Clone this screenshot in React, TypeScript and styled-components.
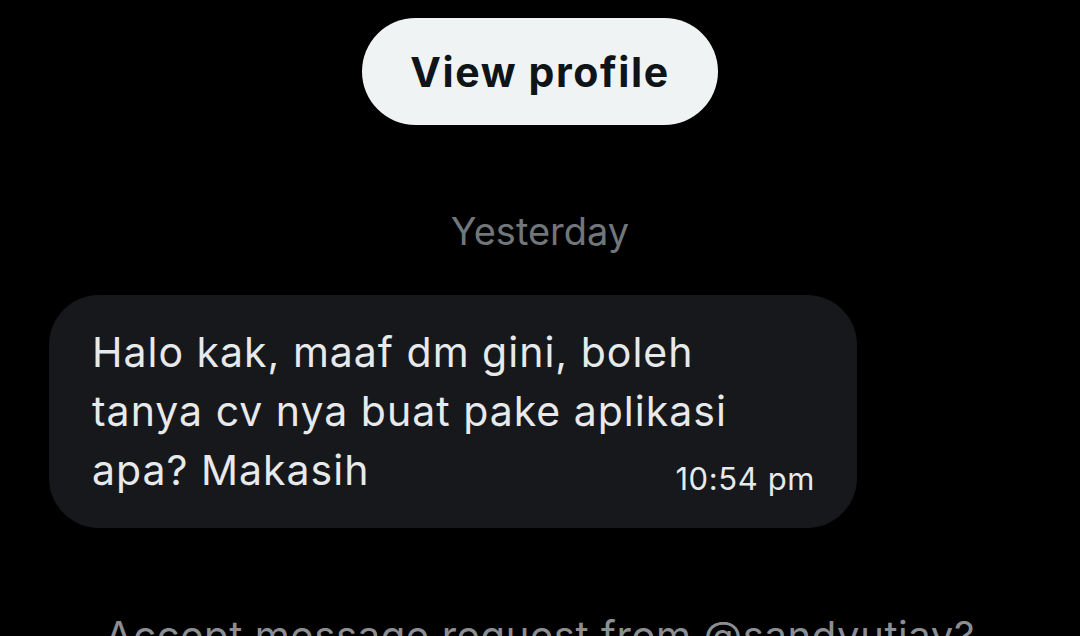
import * as React from 'react';
import styled, { createGlobalStyle } from 'styled-components';

const GlobalStyle = createGlobalStyle`
  html, body {
    margin: 0;
    padding: 0;
    background: #000;
    overflow: hidden;
  }
  body {
    font-family: Inter, "Noto Sans", sans-serif;
    -webkit-font-smoothing: antialiased;
  }
`;

const Screen = styled.div`
  width: 1080px;
  height: 636px;
  background: #000;
  display: flex;
  flex-direction: column;
  align-items: center;
  overflow: hidden;

  & > * {
    flex-shrink: 0;
  }
`;

const ProfileButton = styled.button`
  margin-top: 18px;
  width: 356px;
  height: 107px;
  padding: 0;
  border: none;
  border-radius: 54px;
  background: #eff3f4;
  color: #0f1419;
  font-family: inherit;
  font-size: 41px;
  font-weight: 700;
  letter-spacing: 1.6px;
  cursor: pointer;
`;

const DayLabel = styled.div`
  margin-top: 86px;
  height: 40px;
  line-height: 40px;
  font-size: 38px;
  color: #71767b;
`;

const Thread = styled.div`
  align-self: stretch;
  display: flex;
  flex-direction: column;
  padding: 0 49px;
  margin-top: 44px;
`;

const Bubble = styled.div`
  width: 808px;
  height: 233px;
  box-sizing: border-box;
  background: #16181c;
  border-radius: 50px;
  padding: 28px 42px 28px 43px;
  display: grid;
  grid-template-areas: 'msg';
`;

const MessageText = styled.p`
  grid-area: msg;
  margin: 0;
  font-size: 41px;
  line-height: 59px;
  letter-spacing: 1px;
  color: #e7e9ea;
  white-space: nowrap;
`;

const Time = styled.span`
  grid-area: msg;
  justify-self: end;
  align-self: end;
  margin-bottom: 3px;
  font-size: 31px;
  line-height: 36px;
  letter-spacing: 0.6px;
  color: #e7e9ea;
  white-space: nowrap;
`;

const RequestPrompt = styled.div`
  margin-top: 84px;
  font-size: 40px;
  line-height: 48px;
  letter-spacing: 0.6px;
  color: #8b8f93;
  white-space: nowrap;
`;

export default function App() {
  return (
    <Screen>
      <GlobalStyle />
      <ProfileButton>View profile</ProfileButton>
      <DayLabel>Yesterday</DayLabel>
      <Thread>
        <Bubble>
          <MessageText>
            Halo kak, maaf dm gini, boleh
            <br />
            tanya cv nya buat pake aplikasi
            <br />
            apa? Makasih
          </MessageText>
          <Time>10:54 pm</Time>
        </Bubble>
      </Thread>
      <RequestPrompt>Accept message request from @sandyutiay?</RequestPrompt>
    </Screen>
  );
}
